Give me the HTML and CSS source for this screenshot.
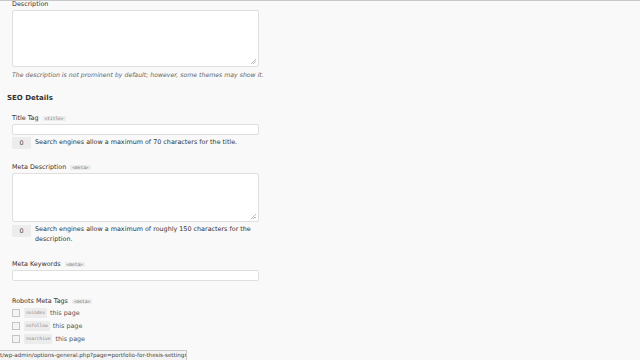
FILE: index.html
```html
<!DOCTYPE html>
<html lang="en">
<head>
    <meta charset="UTF-8">
    <meta name="viewport" content="width=device-width, initial-scale=1.0">
    <title>Portfolio for Thesis Settings</title>
    <link rel="stylesheet" href="styles.css">
</head>
<body>
    <div class="page">
        <div class="field first">
            <div class="label">Description</div>
            <div class="textarea tall"><span class="grip"></span></div>
            <p class="note">The description is not prominent by default; however, some themes may show it.</p>
        </div>

        <h3 class="section-title">SEO Details</h3>

        <div class="field">
            <div class="label">Title Tag <code>&lt;title&gt;</code></div>
            <div class="input"></div>
            <div class="counter-row">
                <span class="counter">0</span>
                <span class="counter-text">Search engines allow a maximum of 70 characters for the title.</span>
            </div>
        </div>

        <div class="field gap-lg">
            <div class="label">Meta Description <code>&lt;meta&gt;</code></div>
            <div class="textarea short"><span class="grip"></span></div>
            <div class="counter-row spaced">
                <span class="counter">0</span>
                <span class="counter-text">Search engines allow a maximum of roughly 150 characters for the description.</span>
            </div>
        </div>

        <div class="field gap-xl">
            <div class="label">Meta Keywords <code>&lt;meta&gt;</code></div>
            <div class="input"></div>
        </div>

        <div class="field gap-xl">
            <div class="label">Robots Meta Tags <code>&lt;meta&gt;</code></div>
            <ul class="checks">
                <li><span class="box"></span><code>noindex</code> this page</li>
                <li><span class="box"></span><code>nofollow</code> this page</li>
                <li><span class="box"></span><code>noarchive</code> this page</li>
            </ul>
        </div>
    </div>

    <div class="status-bar">t/wp-admin/options-general.php?page=portfolio-for-thesis-settings</div>
</body>
</html>
```

FILE: styles.css
```css
body {
    margin: 0;
    padding: 0;
    background-color: #f9f9f9;
    border-top: 1px solid #c8c8cc;
    font-family: "DejaVu Sans", Verdana, sans-serif;
    font-size: 6.4px;
    line-height: 10px;
    color: #333;
    height: 359px;
    overflow: hidden;
}

.page {
    width: 252px;
    padding-left: 7px;
}

.field {
    margin-left: 5px;
    margin-top: 9px;
}

.field.first {
    margin-top: -2px;
}

.field.gap-lg {
    margin-top: 12px;
}

.field.gap-xl {
    margin-top: 14px;
}

.label {
    height: 9px;
    padding-top: 1px;
}

.first .label {
    height: 10px;
    padding-top: 0;
}

code {
    font-family: "DejaVu Sans Mono", monospace;
    font-size: 4.5px;
    background-color: #ececec;
    color: #777;
    padding: 0 2px;
    margin-left: 2px;
    border-radius: 1px;
}

.textarea, .input {
    background-color: #fff;
    border: 1px solid #dfdfdf;
    border-radius: 2px;
    box-sizing: border-box;
    position: relative;
}

.textarea {
    margin-top: 1px;
}

.textarea.tall {
    height: 57px;
}

.textarea.short {
    height: 49px;
    margin-top: 2px;
}

.grip {
    position: absolute;
    right: 2px;
    bottom: 2px;
    width: 5px;
    height: 5px;
    background: linear-gradient(135deg, transparent 45%, #bbb 45%, #bbb 55%, transparent 55%, transparent 70%, #bbb 70%, #bbb 80%, transparent 80%);
}

.input {
    height: 11px;
    margin-top: 2px;
}

.note {
    margin: 3px 0 0;
    font-size: 6.2px;
    font-style: italic;
    color: #666;
    white-space: nowrap;
}

.section-title {
    margin: 12px 0 -1px;
    font-size: 7px;
    line-height: 12px;
    font-weight: bold;
    color: #333;
}

.counter-row {
    display: flex;
    align-items: flex-start;
    margin-top: 2px;
}

.counter-row.spaced {
    margin-top: 3px;
}

.counter {
    flex: none;
    width: 19px;
    height: 12px;
    line-height: 12px;
    text-align: center;
    background-color: #ececec;
    color: #444;
    margin-right: 4px;
}

.counter-text {
    width: 226px;
}

.spaced .counter-text {
    margin-top: -1px;
}

.checks {
    list-style: none;
    margin: 1px 0 0;
    padding: 0;
}

.checks li {
    display: flex;
    align-items: center;
    height: 13px;
    color: #555;
}

.checks li code {
    margin: 0 3px 0 4px;
    color: #888;
}

.box {
    width: 6px;
    height: 6px;
    border: 1px solid #c4c4c4;
    background-color: #f4f4f4;
}

.status-bar {
    position: fixed;
    left: 0;
    bottom: 0;
    width: 186px;
    height: 9px;
    line-height: 9px;
    font-size: 5.6px;
    color: #444;
    background-color: #f3f3f3;
    border: 1px solid #c8c8c8;
    border-left: none;
    border-bottom: none;
    white-space: nowrap;
    overflow: hidden;
}
```
